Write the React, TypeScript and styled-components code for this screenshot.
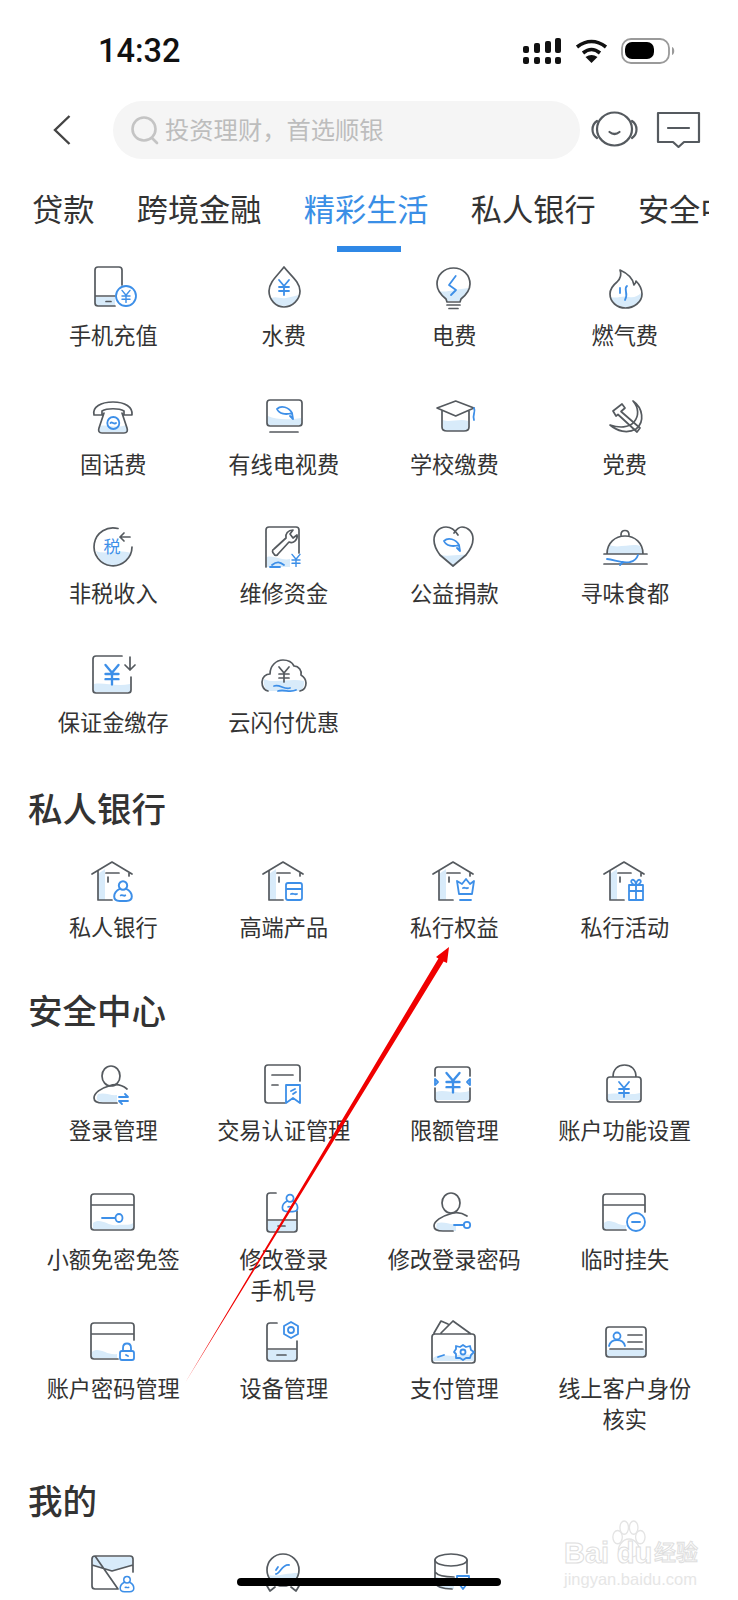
import React from 'react';
import styled, { createGlobalStyle } from 'styled-components';

const GREY = '#555a5f';
const BLUE = '#3d8fe8';
const PALE = '#d8ebfa';

const GlobalStyle = createGlobalStyle`
  html, body {
    margin: 0;
    padding: 0;
    background: #fff;
  }
  * {
    box-sizing: border-box;
  }
`;

const Page = styled.div`
  position: relative;
  width: 738px;
  height: 1600px;
  overflow: hidden;
  background: #fff;
  color: #333;
  font-family: 'Noto Sans CJK SC', 'Noto Sans', sans-serif;
`;

const StatusBar = styled.div`
  height: 101px;
  padding: 0 62px 0 98px;
  display: flex;
  justify-content: space-between;
  align-items: center;
`;

const Time = styled.div`
  font-family: Roboto, 'Liberation Sans', sans-serif;
  font-size: 32.5px;
  font-weight: 500;
  color: #111;
  line-height: 40px;
`;

const StatusIcons = styled.div`
  display: flex;
  align-items: center;
  gap: 13px;
`;

const Header = styled.div`
  display: flex;
  align-items: center;
  height: 58px;
  padding-left: 53px;
`;

const BackIcon = styled.svg`
  width: 18px;
  height: 30px;
  margin-right: 42px;
  fill: none;
  stroke: #444;
  stroke-width: 2.4;
`;

const SearchBar = styled.div`
  width: 467px;
  height: 58px;
  border-radius: 29px;
  background: #f5f5f5;
  display: flex;
  align-items: center;
  padding-left: 18px;
  gap: 6px;
  margin-right: 11px;
`;

const Placeholder = styled.span`
  font-size: 24.3px;
  color: #bdbdbd;
  line-height: 28px;
  margin-bottom: 2px;
`;

const HeaderIcon = styled.svg<{ $gap?: number }>`
  margin-left: ${(p) => p.$gap ?? 0}px;
  margin-bottom: 2px;
  fill: none;
  stroke: ${GREY};
  stroke-width: 2.2;
  stroke-linecap: round;
  stroke-linejoin: round;
  flex: none;
`;

const Tabs = styled.div`
  display: flex;
  gap: 42.3px;
  width: 709px;
  padding: 25px 0 23px 32px;
  overflow: hidden;
`;

const Tab = styled.div<{ $active?: boolean }>`
  position: relative;
  flex: none;
  font-size: 31.2px;
  line-height: 48px;
  color: ${(p) => (p.$active ? '#3a8fe6' : '#333')};
  &::after {
    content: '';
    display: ${(p) => (p.$active ? 'block' : 'none')};
    position: absolute;
    left: 33px;
    bottom: -20px;
    width: 64px;
    height: 6px;
    background: #2f88e6;
  }
`;

const Section = styled.section<{ $top?: number }>`
  padding: ${(p) => p.$top ?? 0}px 28px 0;
`;

const SectionTitle = styled.h2<{ $gap?: number }>`
  margin: 0 0 ${(p) => p.$gap ?? 16}px;
  font-size: 34.5px;
  font-weight: 500;
  line-height: 48px;
  color: #333;
`;

const Grid = styled.div`
  display: grid;
  grid-template-columns: repeat(4, 170.5px);
  grid-auto-rows: 129px;
`;

const Item = styled.div`
  display: flex;
  flex-direction: column;
  align-items: center;
`;

const Label = styled.div`
  font-size: 22.2px;
  line-height: 31px;
  color: #333;
  text-align: center;
  white-space: pre-line;
`;

const Glyph = styled.svg`
  width: 64px;
  height: 64px;
  flex: none;
  fill: none;
  stroke: ${GREY};
  stroke-width: 1.7;
  stroke-linecap: round;
  stroke-linejoin: round;
`;

const Wash = styled.path`
  fill: ${PALE};
  stroke: none;
`;

const Ink = styled.g`
  stroke: ${BLUE};
  stroke-width: 1.8;
`;

const TaxText = styled.text`
  fill: ${BLUE};
  stroke: none;
  font-size: 17px;
  font-family: 'Noto Sans CJK SC', sans-serif;
  text-anchor: middle;
`;

const HomeBar = styled.div`
  position: absolute;
  left: 237px;
  top: 1578px;
  width: 264px;
  height: 8px;
  border-radius: 4px;
  background: #000;
`;

const ArrowLayer = styled.svg`
  position: absolute;
  left: 0;
  top: 0;
  width: 738px;
  height: 1600px;
  pointer-events: none;
`;

const Watermark = styled.div`
  position: absolute;
  left: 564px;
  top: 1520px;
  width: 134px;
  color: #e6e6e6;
`;

const MarkPaw = styled.svg`
  position: absolute;
  left: 46px;
  top: 0;
  width: 36px;
  height: 38px;
  fill: none;
  stroke: #e4e4e4;
  stroke-width: 1.4;
`;

const MarkLogo = styled.div`
  position: relative;
  margin-top: 18px;
  display: flex;
  justify-content: space-between;
  align-items: flex-end;
  font-family: 'Liberation Sans', 'Noto Sans CJK SC', sans-serif;
  font-size: 29px;
  font-weight: 700;
  line-height: 30px;
  white-space: nowrap;
  color: #fff;
  -webkit-text-stroke: 1px #dedede;
`;

const MarkWord = styled.span<{ $gap?: number }>`
  margin-left: ${(p) => p.$gap ?? 0}px;
`;

const MarkCjk = styled.span`
  font-size: 22px;
  font-weight: 500;
`;

const MarkSite = styled.div`
  margin-top: 1px;
  font-family: 'Liberation Sans', sans-serif;
  font-size: 16.5px;
  line-height: 20px;
  white-space: nowrap;
`;

const Yen = ({ x, y, s = 1 }: { x: number; y: number; s?: number }) => (
  <path
    transform={`translate(${x} ${y}) scale(${s})`}
    d="M-5-7 0-1 5-7M0-1V8M-5 0H5M-5 4H5"
  />
);

const Person = ({ x, y, s = 1 }: { x: number; y: number; s?: number }) => (
  <Ink transform={`translate(${x} ${y}) scale(${s})`}>
    <circle cx="0" cy="-5" r="3.8" />
    <path d="M-3-2C-7 0-8 3-8 5-8 8-6 9-3 9H3C6 9 8 8 8 5 8 3 7 0 3-2M-2 4C-1 3 1 5 2 4" />
  </Ink>
);

const Swirl = ({ x, y }: { x: number; y: number }) => (
  <Ink transform={`translate(${x} ${y})`}>
    <path d="M-8-4C-4-8 4-6 7 0L8 6M-8-4C-6 1 1 2 7 0M8 6 5 3" />
  </Ink>
);

const Icon = ({ children }: { children: React.ReactNode }) => (
  <Glyph viewBox="0 0 64 64">{children}</Glyph>
);

const House = ({ children }: { children: React.ReactNode }) => (
  <Icon>
    <Wash d="M17 27 24 22V53H17Z" />
    <path d="M11 27 31 15 51 27M17 24V53H31M25 26H38M27 30V35M48 26V29" />
    {children}
  </Icon>
);

type Entry = { label?: string; icon: React.ReactNode };

const life: Entry[] = [
  {
    label: '手机充值',
    icon: (
      <Icon>
        <Wash d="M14 42H34V51H14Z" />
        <path d="M34 51H17a3 3 0 0 1-3-3V15a3 3 0 0 1 3-3H38a3 3 0 0 1 3 3V30M14 41H34M25 46.500H30" />
        <Ink>
          <circle cx="45" cy="41" r="10" />
          <Yen x={45} y={41} s={0.8} />
        </Ink>
      </Icon>
    ),
  },
  {
    label: '水费',
    icon: (
      <Icon>
        <Wash d="M19 43C25 41 28 44 34 43 39 42 43 41 47 40 46 47 40 51 32 51 25 51 21 48 19 43Z" />
        <path d="M32 12C26 20 17 27 17 36 17 45 24 52 32 52 40 52 48 45 48 36 48 27 38 20 32 12Z" />
        <Ink>
          <Yen x={32} y={32} />
        </Ink>
      </Icon>
    ),
  },
  {
    label: '电费',
    icon: (
      <Icon>
        <Wash d="M17 36C24 38 34 34 47 33 45 39 41 41 38 46H25C23 42 19 40 17 36Z" />
        <path d="M24 44C19 40 15 35 15 29 15 20 22 13 31.500 13 41 13 48 20 48 29 48 35 44 40 39 44L38 47H25ZM25 50H38M27 53.500H36" />
        <Ink>
          <path d="M33.700 21 27 30 34 35 29 40" />
        </Ink>
      </Icon>
    ),
  },
  {
    label: '燃气费',
    icon: (
      <Icon>
        <Wash d="M18 42C24 44 30 40 36 42 41 43 45 41 48 38 49 47 41 52 32.500 52 25 52 20 48 18 42Z" />
        <path d="M27 15C36 19 40 24 41 30 43 28 43 27 43 26 47 30 49 34 49 39 49 47 41 53 32.500 53 24 53 17 47 17 39 17 34 19 31 24 27 27 24 29 20 27 15Z" />
        <Ink>
          <path d="M34 31C30 34 36 38 32 45M27 33V38" />
        </Ink>
      </Icon>
    ),
  },
  {
    label: '固话费',
    icon: (
      <Icon>
        <Wash d="M19 42C26 40 36 45 45 41L47 48H18Z" />
        <path d="M13 31C11 23 20 18 32 18 44 18 52 23 51 31H43V27C38 24 26 24 21 27V31ZM23 29 18 44C17 47 18 49 21 49H43C46 49 47 47 46 44L41 29" />
        <Ink>
          <circle cx="32.300" cy="39" r="6" />
          <path d="M29.500 39C31 37 33 41 35 39" />
        </Ink>
      </Icon>
    ),
  },
  {
    label: '有线电视费',
    icon: (
      <Icon>
        <Wash d="M16 32C24 36 38 36 49 34V41H16Z" />
        <path d="M18 16H47a3 3 0 0 1 3 3V39a3 3 0 0 1-3 3H18a3 3 0 0 1-3-3V19a3 3 0 0 1 3-3ZM18 48H46" />
        <Swirl x={33} y={29} />
      </Icon>
    ),
  },
  {
    label: '学校缴费',
    icon: (
      <Icon>
        <Wash d="M21 36C28 39 38 34 46 37V43C46 46 44 47 42 47H25C23 47 21 46 21 43Z" />
        <path d="M33.700 17 15 24 33.700 32 52 24ZM20 27V43C20 46 22 47 25 47H42C45 47 47 46 47 43V27" />
        <Ink>
          <path d="M52 24C54 28 50 31 52 36" />
        </Ink>
      </Icon>
    ),
  },
  {
    label: '党费',
    icon: (
      <Icon>
        <path d="M40 17C50 24 52 38 43 45 34 50 24 47 17 41 26 44 36 44 41 38 46 32 46 24 40 17Z" />
        <path d="M20 27 29 20 32 24 28 27.500 47 44 44 48 25 30.500 23 32Z" />
      </Icon>
    ),
  },
  {
    label: '非税收入',
    icon: (
      <Icon>
        <Wash d="M15 38C24 42 36 36 50 40 47 48 40 53 32 53 24 53 18 47 15 38Z" />
        <path d="M37 15.500A19 19 0 1 0 51 34M49 24H39M43 20 39 24 43 28" />
        <TaxText x="31" y="40">税</TaxText>
      </Icon>
    ),
  },
  {
    label: '维修资金',
    icon: (
      <Icon>
        <Wash d="M15 44C22 42 30 48 38 46V54H15Z" />
        <path d="M14 54V17a3 3 0 0 1 3-3H44a3 3 0 0 1 3 3V40M22 41C20 39 20 37 22 36L34 25C33 21 36 17 41 17L38 21 41 25 45 22C46 27 41 31 37 29L26 41C25 43 23 43 22 41Z" />
        <Ink>
          <Yen x={44} y={47} s={0.8} />
          <path d="M20 52C25 48 28 49 32 52M18 54H28" />
        </Ink>
      </Icon>
    ),
  },
  {
    label: '公益捐款',
    icon: (
      <Icon>
        <Wash d="M19 42C26 44 36 41 44 42L31 53Z" />
        <path d="M36 22C33 17 28 14 24 14 17 14 12 20 12 27 12 33 15 38 18 42L31 53 44 42C48 37 51 32 51 26 51 19 46 14 40 14 37 14 34 17 32 20" />
        <Swirl x={30} y={32} />
      </Icon>
    ),
  },
  {
    label: '寻味食都',
    icon: (
      <Icon>
        <Wash d="M17 32C24 36 40 30 47 33L50 41H14Z" />
        <path d="M14 41C14 30 22 23 32 23 42 23 50 30 50 41M28 22C28 16 36 16 36 22M11 41H54M11 51H54" />
        <Ink>
          <path d="M14 46C22 47 30 51 37 49 42 48 44 45 45 42M30 49 27 52" />
        </Ink>
      </Icon>
    ),
  },
  {
    label: '保证金缴存',
    icon: (
      <Icon>
        <Wash d="M13 42C22 40 36 45 49 42V50H13Z" />
        <path d="M41 14H15a3 3 0 0 0-3 3V48a3 3 0 0 0 3 3H47a3 3 0 0 0 3-3V35M49 15V28M44 23 49 28 54 23" />
        <Ink>
          <Yen x={31} y={32} s={1.3} />
        </Ink>
      </Icon>
    ),
  },
  {
    label: '云闪付优惠',
    icon: (
      <Icon>
        <Wash d="M12 37C22 42 38 36 52 39 53 44 50 49 46 49H17C13 48 11 42 12 37Z" />
        <path d="M16 49C12 48 10 44 10 40 10 35 14 32 18 32 18 24 24 18 31 18 36 18 40 20 42 24 47 24 50 29 49 33 52 35 54 38 54 41 54 45 52 48 48 49" />
        <Yen x={32} y={32} />
        <Ink>
          <path d="M22 44C28 42 32 48 38 46M26 49C32 47 38 51 44 48" />
        </Ink>
      </Icon>
    ),
  },
];

const privateBank: Entry[] = [
  {
    label: '私人银行',
    icon: (
      <House>
        <Person x={42} y={44} s={1.1} />
      </House>
    ),
  },
  {
    label: '高端产品',
    icon: (
      <House>
        <Ink>
          <path d="M36 36H48a2 2 0 0 1 2 2V51a2 2 0 0 1-2 2H36a2 2 0 0 1-2-2V38a2 2 0 0 1 2-2ZM34 42H50M39 47C41 46 43 48 45 47" />
        </Ink>
      </House>
    ),
  },
  {
    label: '私行权益',
    icon: (
      <House>
        <Ink>
          <path d="M35 34 40 37 44 32 48 37 52 34 50 47H37ZM38 53H49M41 41C43 40 44 42 46 41" />
        </Ink>
      </House>
    ),
  },
  {
    label: '私行活动',
    icon: (
      <House>
        <Ink>
          <path d="M36 38H50V53H36ZM43 38V53M36 44H50M43 38C39 38 37 34 39 33 41 32 43 35 43 38 43 35 45 32 47 33 49 34 47 38 43 38Z" />
        </Ink>
      </House>
    ),
  },
];

const security: Entry[] = [
  {
    label: '登录管理',
    icon: (
      <Icon>
        <Wash d="M17 44C24 42 30 46 36 45V52H22C17 52 14 50 17 44Z" />
        <ellipse cx="30" cy="26" rx="9" ry="10" />
        <path d="M46 39C40 34 33 34 28 36 20 38 13 43 13 48 13 52 17 53 22 53H36" />
        <Ink>
          <path d="M38 47H47L44 44M47 51H38L41 54" />
        </Ink>
      </Icon>
    ),
  },
  {
    label: '交易认证管理',
    icon: (
      <Icon>
        <path d="M33 53H16a3 3 0 0 1-3-3V18a3 3 0 0 1 3-3H45a3 3 0 0 1 3 3V31M20 25H41M20 35H26" />
        <Ink>
          <path d="M34 35H48V53L41 48 34 53ZM39 41 43 39M41 44 44 42" />
        </Ink>
      </Icon>
    ),
  },
  {
    label: '限额管理',
    icon: (
      <Icon>
        <Wash d="M14 42C22 39 36 45 47 41V50H14Z" />
        <path d="M13 26V20a3 3 0 0 1 3-3H45a3 3 0 0 1 3 3V26M13 38V49a3 3 0 0 0 3 3H45a3 3 0 0 0 3-3V38" />
        <Ink>
          <Yen x={31} y={32} s={1.3} />
        </Ink>
        <Ink>
          <path d="M13 29 16 32 13 35ZM48 29 45 32 48 35Z" />
        </Ink>
      </Icon>
    ),
  },
  {
    label: '账户功能设置',
    icon: (
      <Icon>
        <Wash d="M15 44C22 42 36 46 47 43V50H15Z" />
        <path d="M17 27H45a3 3 0 0 1 3 3V49a3 3 0 0 1-3 3H17a3 3 0 0 1-3-3V30a3 3 0 0 1 3-3ZM20 27C20 19 25 15 31.500 15 38 15 43 19 43 27" />
        <Ink>
          <Yen x={31} y={39} />
        </Ink>
      </Icon>
    ),
  },
  {
    label: '小额免密免签',
    icon: (
      <Icon>
        <Wash d="M12 44C20 38 28 48 36 46 42 45 48 47 52 44V50H12Z" />
        <path d="M13 15H50a3 3 0 0 1 3 3V48a3 3 0 0 1-3 3H13a3 3 0 0 1-3-3V18a3 3 0 0 1 3-3ZM10 26H53" />
        <Ink>
          <path d="M21 39H34" />
          <ellipse cx="38" cy="39" rx="3.500" ry="4" />
        </Ink>
      </Icon>
    ),
  },
  {
    label: '修改登录\n手机号',
    icon: (
      <Icon>
        <Wash d="M16 42H44V52H16Z" />
        <path d="M24 14H18a3 3 0 0 0-3 3V50a3 3 0 0 0 3 3H42a3 3 0 0 0 3-3V32M15 41H45M26 47H33" />
        <Person x={38} y={24} s={0.95} />
      </Icon>
    ),
  },
  {
    label: '修改登录密码',
    icon: (
      <Icon>
        <Wash d="M15 44C22 42 28 46 34 45V52H20C16 52 13 50 15 44Z" />
        <ellipse cx="29" cy="24" rx="9" ry="10" />
        <path d="M45 37C39 33 33 33 28 35 20 37 12 42 12 47 12 51 16 52 21 52H31" />
        <Ink>
          <path d="M32 46H42" />
          <circle cx="45" cy="46" r="3.200" />
        </Ink>
      </Icon>
    ),
  },
  {
    label: '临时挂失',
    icon: (
      <Icon>
        <Wash d="M11 44C18 38 26 48 33 46V50H11Z" />
        <path d="M33 51H13a3 3 0 0 1-3-3V18a3 3 0 0 1 3-3H49a3 3 0 0 1 3 3V33M10 26H52" />
        <Ink>
          <circle cx="43" cy="43" r="9" />
          <path d="M39 43H47" />
        </Ink>
      </Icon>
    ),
  },
  {
    label: '账户密码管理',
    icon: (
      <Icon>
        <Wash d="M11 44C18 38 26 48 36 46V50H11Z" />
        <path d="M37 51H13a3 3 0 0 1-3-3V18a3 3 0 0 1 3-3H50a3 3 0 0 1 3 3V32M10 26H53" />
        <Ink>
          <path d="M41 43H51a2 2 0 0 1 2 2V50a2 2 0 0 1-2 2H41a2 2 0 0 1-2-2V45a2 2 0 0 1 2-2ZM42 42V40C42 34 50 34 50 40V42M45 47 47 48" />
        </Ink>
      </Icon>
    ),
  },
  {
    label: '设备管理',
    icon: (
      <Icon>
        <Wash d="M16 42H44V52H16Z" />
        <path d="M25 15H18a3 3 0 0 0-3 3V50a3 3 0 0 0 3 3H42a3 3 0 0 0 3-3V33M15 41H45M25 47H34" />
        <Ink>
          <path d="M39 14 46 18V26L39 30 32 26V18Z" />
          <circle cx="39" cy="22" r="3" />
        </Ink>
      </Icon>
    ),
  },
  {
    label: '支付管理',
    icon: (
      <Icon>
        <Wash d="M11 50C18 44 28 50 36 47 42 45 48 48 52 46V53H11Z" />
        <path d="M13 26H50a3 3 0 0 1 3 3V52a3 3 0 0 1-3 3H13a3 3 0 0 1-3-3V29a3 3 0 0 1 3-3ZM12 25 19 13 26 16M19 25 31 13 49 26" />
        <Ink>
          <path d="M41 37 44 39 48 38 49 42 52 44 49 47 48 50 44 50 41 52 38 50 34 50 34 46 32 44 34 41 34 38 38 39Z" />
          <circle cx="41" cy="44" r="2.500" />
          <path d="M16 49 22 47" />
        </Ink>
      </Icon>
    ),
  },
  {
    label: '线上客户身份\n核实',
    icon: (
      <Icon>
        <Wash d="M14 42C24 42 40 42 52 41V48H14Z" />
        <path d="M16 19H50a3 3 0 0 1 3 3V46a3 3 0 0 1-3 3H16a3 3 0 0 1-3-3V22a3 3 0 0 1 3-3ZM35 27H49M35 34H49M17 41H50" />
        <Ink>
          <circle cx="24" cy="28" r="3.500" />
          <path d="M16 38C17 34 20 32 24 32 28 32 31 34 32 38" />
        </Ink>
      </Icon>
    ),
  },
];

// the labels of this row lie below the fold of the screenshot
const mine: Entry[] = [
  {
    icon: (
      <Icon>
        <Wash d="M12 18H51V26L31 32 12 26Z" />
        <path d="M14 17H49a3 3 0 0 1 3 3V33M37 50H14a3 3 0 0 1-3-3V20a3 3 0 0 1 3-3ZM11 26 31 32 52 26" />
        <Person x={46} y={45} s={0.85} />
      </Icon>
    ),
  },
  {
    icon: (
      <Icon>
        <Wash d="M17 36C24 38 34 34 46 34 45 42 38 47 31 47 24 47 19 42 17 36Z" />
        <circle cx="31" cy="31" r="16" />
        <path d="M21 44 15 47 18 52 23 48M41 44 47 47 44 52 39 48" />
        <Ink>
          <path d="M24 35C28 35 30 25 37 26M26 28 24 31" />
        </Ink>
      </Icon>
    ),
  },
  {
    icon: (
      <Icon>
        <Wash d="M14 38C20 40 26 38 32 40V50H22C18 50 14 48 14 44Z" />
        <ellipse cx="29" cy="21" rx="16" ry="6" />
        <path d="M13 21V43C13 47 20 50 30 50M45 21V34M13 33C16 37 24 38 32 38" />
        <Ink>
          <path d="M35 37H47V42L41 50 35 42Z" />
        </Ink>
      </Icon>
    ),
  },
];

const tabs = ['贷款', '跨境金融', '精彩生活', '私人银行', '安全中心'];

const Services = ({ items }: { items: Entry[] }) => (
  <Grid>
    {items.map((item, i) => (
      <Item key={i}>
        {item.icon}
        {item.label && <Label>{item.label}</Label>}
      </Item>
    ))}
  </Grid>
);

const App = () => (
  <Page>
    <GlobalStyle />
    <StatusBar>
      <Time>14:32</Time>
      <StatusIcons>
        <svg width="39" height="26" viewBox="0 0 39 26" fill="#111">
          <rect x="0" y="8" width="6" height="7" rx="2" />
          <rect x="0" y="19" width="6" height="7" rx="2" />
          <rect x="11" y="5" width="6" height="10" rx="2" />
          <rect x="11" y="19" width="6" height="7" rx="2" />
          <rect x="22" y="3" width="6" height="12" rx="2" />
          <rect x="22" y="19" width="6" height="7" rx="2" />
          <rect x="32" y="0" width="6" height="15" rx="2" />
          <rect x="32" y="19" width="6" height="7" rx="2" />
        </svg>
        <svg width="33" height="24" viewBox="0 0 33 24" fill="none" stroke="#111" strokeWidth="3.6">
          <path d="M2 8Q16.500-3 31 8M8 14Q16.500 7 25 14" />
          <path d="M16.500 24 10.500 18Q16.500 14 22.500 18Z" fill="#111" stroke="none" />
        </svg>
        <svg width="55" height="26" viewBox="0 0 55 26">
          <rect x="1" y="1" width="47" height="24" rx="9" fill="none" stroke="#9a9a9a" strokeWidth="1.8" />
          <rect x="4" y="4" width="29" height="17" rx="7" fill="#000" />
          <path d="M51 9C54 10 54 16 51 17Z" fill="#9a9a9a" />
        </svg>
      </StatusIcons>
    </StatusBar>

    <Header>
      <BackIcon viewBox="0 0 18 30">
        <path d="M16.500 1 2 15 16.500 29" />
      </BackIcon>
      <SearchBar>
        <svg width="28" height="30" viewBox="0 0 28 30" fill="none" stroke="#c4c4c4" strokeWidth="2.6">
          <circle cx="13" cy="14" r="11.500" />
          <path d="M21 23 26 28" strokeLinecap="round" />
        </svg>
        <Placeholder>投资理财，首选顺银</Placeholder>
      </SearchBar>
      <HeaderIcon width="47" height="36" viewBox="0 0 47 36">
        <ellipse cx="23.500" cy="18" rx="17.500" ry="16.500" />
        <path d="M6 10C0 14 0 23 6 27M41 10C47 14 47 23 41 27" />
        <path d="M18.500 21Q23.500 25 28.500 21" />
      </HeaderIcon>
      <HeaderIcon $gap={18} width="45" height="37" viewBox="0 0 45 37">
        <path d="M2 2H43V31H28L22.500 36 17 31H2ZM12 17H33" />
      </HeaderIcon>
    </Header>

    <Tabs>
      {tabs.map((tab) => (
        <Tab key={tab} $active={tab === '精彩生活'}>
          {tab}
        </Tab>
      ))}
    </Tabs>

    <Section>
      <Services items={life} />
    </Section>
    <Section $top={12}>
      <SectionTitle>私人银行</SectionTitle>
      <Services items={privateBank} />
    </Section>
    <Section $top={9}>
      <SectionTitle $gap={17}>安全中心</SectionTitle>
      <Services items={security} />
    </Section>
    <Section $top={38}>
      <SectionTitle>我的</SectionTitle>
      <Services items={mine} />
    </Section>

    <ArrowLayer viewBox="0 0 738 1600">
      <polygon
        points="185,1383 438.400,958.400 436,957 449,947 447,963 443.600,961.600"
        fill="#f00000"
      />
    </ArrowLayer>

    <Watermark>
      <MarkPaw viewBox="0 0 38 40">
        <ellipse cx="8" cy="18" rx="5" ry="7" />
        <ellipse cx="15" cy="8" rx="4.500" ry="7" />
        <ellipse cx="25" cy="8" rx="4.500" ry="7" />
        <ellipse cx="32" cy="18" rx="5" ry="7" />
        <path d="M10 36C6 28 14 20 20 20 26 20 34 28 30 36 26 40 14 40 10 36Z" />
      </MarkPaw>
      <MarkLogo>
        <MarkWord>Bai</MarkWord>
        <MarkWord $gap={6}>du</MarkWord>
        <MarkCjk>经验</MarkCjk>
      </MarkLogo>
      <MarkSite>jingyan.baidu.com</MarkSite>
    </Watermark>

    <HomeBar />
  </Page>
);

export default App;
